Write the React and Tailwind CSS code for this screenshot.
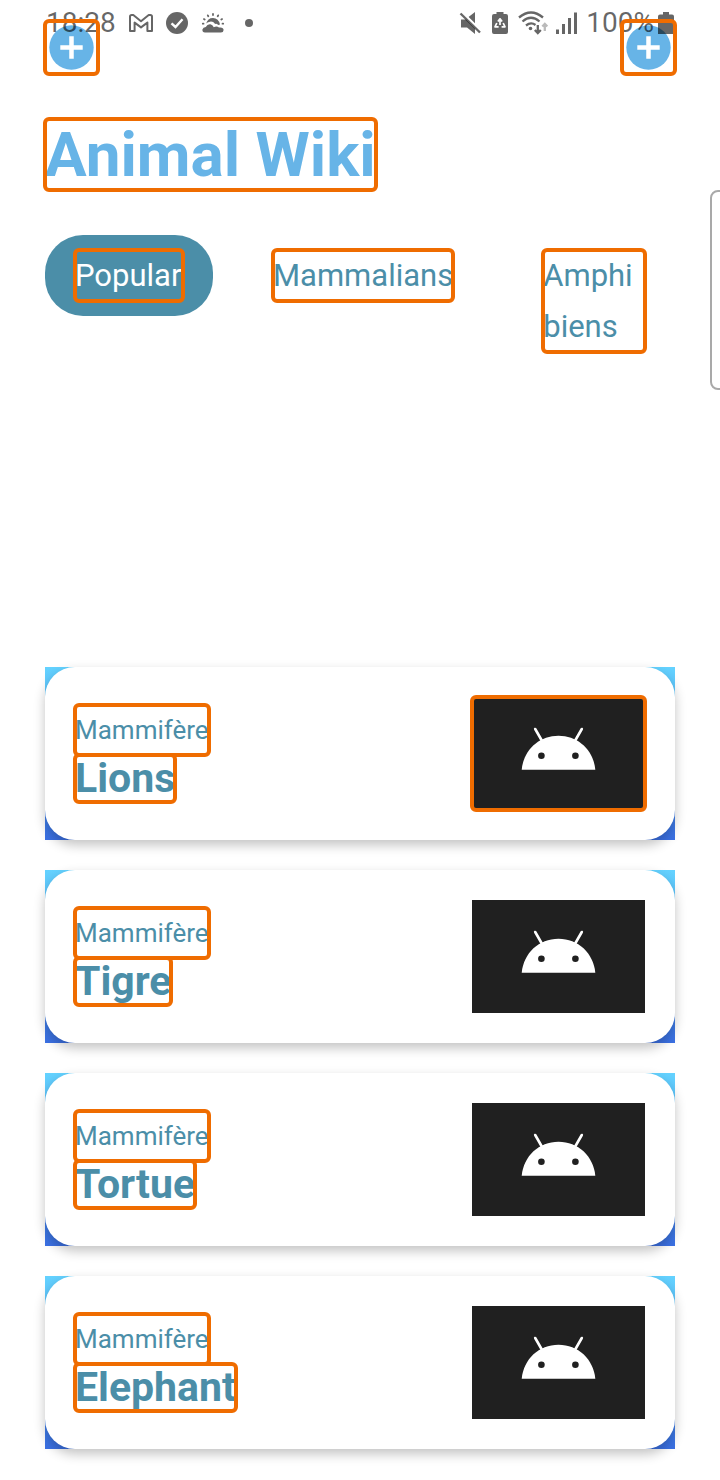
import React from "react";
import clsx from "clsx";

const marked = "rounded-[4px] outline-4 -outline-offset-2 outline-[#ef6c00]";

const animals = [
  { family: "Mammifère", name: "Lions", selected: true },
  { family: "Mammifère", name: "Tigre" },
  { family: "Mammifère", name: "Tortue" },
  { family: "Mammifère", name: "Elephant" },
];

function StatusBar() {
  return (
    <div className="pointer-events-none absolute inset-x-0 top-0 z-10 flex h-[46px] items-center justify-between px-[46px] text-[28px] leading-[46px] text-black/60">
      <div className="flex items-center gap-3">
        <span className="w-[71px]">18:28</span>
        <svg className="h-[18px] w-6" viewBox="0 0 24 18" fill="none" stroke="currentColor" strokeWidth="2" strokeLinejoin="round">
          <path d="M1 2.6Q1 1 2.7 1H4.3L12 7.2L19.7 1H21.3Q23 1 23 2.6V17H18.4V8.6L12 13.4L5.6 8.6V17H1Z" />
        </svg>
        <svg className="size-6" viewBox="0 0 24 24">
          <circle cx="12" cy="12" r="11" fill="currentColor" />
          <path d="M6.5 12.3L10.5 16L17.5 8.2" fill="none" stroke="#fff" strokeWidth="2.4" />
        </svg>
        <svg className="size-6" viewBox="0 0 24 24" fill="currentColor">
          <path d="M5.2 12.6Q6.5 7 12 7Q17.6 7 19 13.6L17.2 13.9Q15.5 12.4 14.2 13Q11.5 9.6 8 11Q6.5 11.4 5.2 12.6Z" />
          <path d="M4 21.6Q1.2 21.4 1.4 18.6Q2 16 4.8 16Q6.3 12.8 9.4 13.2Q11.6 13.6 12.8 16.2Q15.6 14.6 18 16.6Q22.5 16 22.6 19Q22.4 21.6 20 21.6Z" />
          <g stroke="currentColor" strokeWidth="1.8" strokeLinecap="round">
            <path d="M12 4V3M7.3 5.3L6.8 4.4M16.7 5.3L17.2 4.4M3.7 8.6L2.9 8.1M20.3 8.6L21.1 8.1M2.5 12.7H1.8M21.5 12.7H22.2" />
          </g>
        </svg>
        <span className="ml-2 size-2 rounded-full bg-current" />
      </div>
      <div className="flex items-center gap-2">
        <svg className="size-6" viewBox="0 0 24 24" fill="currentColor">
          <path d="M3 8.5H8L17 17.5V23L9 16.5H3Z M10.5 6L17 1V12.5Z" />
          <path d="M4.2 1.5L23.5 20.5" stroke="#fff" strokeWidth="2.4" />
          <path d="M2.5 2.5L22 21.5" stroke="currentColor" strokeWidth="2.4" />
        </svg>
        <svg className="h-6 w-5" viewBox="0 0 20 24">
          <path d="M6.5 1H13.5V3H16Q18 3 18 5V21Q18 23 16 23H4Q2 23 2 21V5Q2 3 4 3H6.5Z" fill="currentColor" />
          <path d="M7.9 10.6L10 7.8L12.1 10.6M13.2 12L15 15.8H11.6M8.6 15.8H5L6.8 12M10 9V14" fill="none" stroke="#fff" strokeWidth="1.7" strokeLinejoin="round" />
        </svg>
        <svg className="h-6 w-[30px]" viewBox="0 0 30 24" fill="none" stroke="currentColor" strokeWidth="2.3">
          <path d="M1 6.5Q13 -3.5 25 6.5M4.5 10.5Q13 3 21.5 10.5M8 14.5Q13 10.5 17.5 14" />
          <circle cx="12.5" cy="17.5" r="1.8" fill="currentColor" stroke="none" />
          <path d="M19.8 14V22M16.8 19L19.8 22L22.8 19" />
          <path d="M26.8 20V13M24.3 15.5L26.8 13L29.3 15.5" opacity="0.45" />
        </svg>
        <svg className="h-6 w-[22px]" viewBox="0 0 22 24" fill="currentColor">
          <path d="M0 18.5H3V23H0ZM6 13H9V23H6ZM12 7H15V23H12ZM18 1.5H21V23H18Z" />
        </svg>
        <span>100%</span>
        <svg className="-ml-1 h-6 w-4" viewBox="0 0 16 24" fill="currentColor">
          <path d="M5 1H11V3.5H14Q16 3.5 16 5.5V23H0V5.5Q0 3.5 2 3.5H5Z" />
        </svg>
      </div>
    </div>
  );
}

function AddButton({ label }) {
  return (
    <button
      type="button"
      aria-label={label}
      className="relative flex size-[53px] items-center justify-center after:absolute after:inset-0 after:z-20 after:rounded-[4px] after:outline-4 after:-outline-offset-2 after:outline-[#ef6c00]"
    >
      <svg className="size-[45px]" viewBox="0 0 45 45">
        <circle cx="22.5" cy="22.5" r="22.2" fill="#67b4e7" />
        <path d="M22.5 11.3V33.7M11.3 22.5H33.7" stroke="#fff" strokeWidth="4.5" />
      </svg>
    </button>
  );
}

function AndroidPicture({ selected }) {
  return (
    <svg
      role="img"
      aria-label="Android"
      viewBox="0 0 173 113"
      className={clsx("h-[113px] w-[173px] shrink-0 bg-[#202020]", selected && marked)}
    >
      <path d="M49.7 72.7C51.5 53 67 38.7 86.5 38.7S121.5 53 123.3 72.7Z" fill="#fff" />
      <path d="M63.2 32L69.8 43.5M109.8 32L103.2 43.5" stroke="#fff" strokeWidth="2.6" strokeLinecap="round" />
      <circle cx="69.4" cy="58.7" r="3.3" fill="#202020" />
      <circle cx="103.4" cy="58.7" r="3.3" fill="#202020" />
    </svg>
  );
}

function AnimalCard({ family, name, selected }) {
  return (
    <li className="bg-linear-to-b from-[#64d2ff] to-[#3b70e4]">
      <article className="flex items-center justify-between rounded-[30px] bg-white p-[30px] shadow-[0_5px_12px_rgba(0,0,0,0.24)]">
        <div className="flex flex-col items-start text-[#4b8ea8]">
          <p className={clsx("text-[26px] leading-[50px]", marked)}>{family}</p>
          <h2 className={clsx("text-[41px] leading-[47px] font-bold", marked)}>{name}</h2>
        </div>
        <AndroidPicture selected={selected} />
      </article>
    </li>
  );
}

export default function App() {
  return (
    <div className="relative min-h-screen overflow-hidden bg-white font-['Roboto',sans-serif]">
      <StatusBar />
      <main className="px-[45px] pt-[21px] pb-[31px]">
        <div className="flex justify-between">
          <AddButton label="Add animal" />
          <AddButton label="Add category" />
        </div>
        <h1 className={clsx("mt-[45px] w-fit text-[62px] leading-[71px] font-bold text-[#67b4e7]", marked)}>
          Animal Wiki
        </h1>
        <nav className="mt-[45px] flex items-start gap-[30px] text-[31px] leading-[51px] text-[#4b8ea8]">
          <button type="button" className="min-w-[168px] rounded-[38px] bg-[#4b8ea8] px-[30px] py-[15px] text-left text-white">
            <span className={clsx("block", marked)}>Popular</span>
          </button>
          <button type="button" className="px-[30px] py-[15px] text-left">
            <span className={clsx("block", marked)}>Mammalians</span>
          </button>
          <button type="button" className="min-w-0 flex-1 px-[30px] py-[15px] text-left">
            <span className={clsx("block", marked)}>
              Amphi
              <wbr />
              biens
            </span>
          </button>
        </nav>
        <ul className="mt-[300px] flex flex-col gap-[30px]">
          {animals.map((animal) => (
            <AnimalCard key={animal.name} {...animal} />
          ))}
        </ul>
      </main>
      <div className="absolute top-[190px] -right-2 h-[200px] w-[18px] rounded-lg border-2 border-[#a9a9a9]" />
    </div>
  );
}
